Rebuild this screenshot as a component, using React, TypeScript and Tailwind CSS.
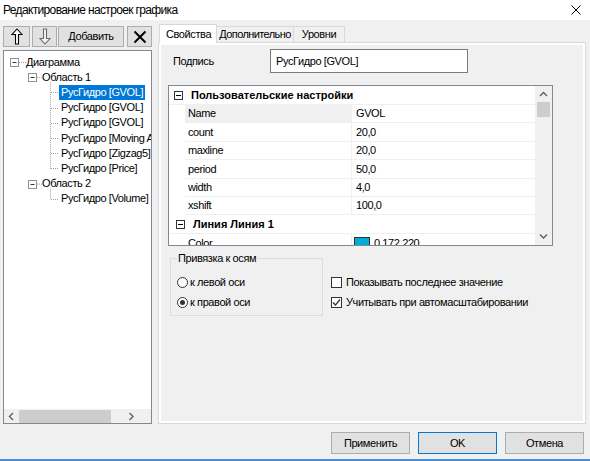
import React from "react";

// tree rows of the left panel
const treeRows = [
  { text: "Диаграмма", pad: "pl-[20px]" },
  { text: "Область 1", pad: "pl-[36px]" },
  { text: "РусГидро [GVOL]", pad: "pl-[55px]", selected: true },
  { text: "РусГидро [GVOL]", pad: "pl-[55px]" },
  { text: "РусГидро [GVOL]", pad: "pl-[55px]" },
  { text: "РусГидро [Moving Average]", pad: "pl-[55px]" },
  { text: "РусГидро [Zigzag5]", pad: "pl-[55px]" },
  { text: "РусГидро [Price]", pad: "pl-[55px]" },
  { text: "Область 2", pad: "pl-[36px]" },
  { text: "РусГидро [Volume]", pad: "pl-[55px]" },
];

const props = [
  { name: "Name", value: "GVOL", active: true },
  { name: "count", value: "20,0" },
  { name: "maxline", value: "20,0" },
  { name: "period", value: "50,0" },
  { name: "width", value: "4,0" },
  { name: "xshift", value: "100,0" },
];

const rowY = (i: number) => 11 + 15.2 * i;

const TreeLines = () => {
  const dot = { stroke: "#a0a0a0", strokeDasharray: "1 1", strokeWidth: 1 };
  const box = (cx: number, cy: number) => (
    <g key={`b${cx}-${cy}`}>
      <rect x={cx - 4} y={cy - 4} width={8} height={8} fill="#fff" stroke="#919191" />
      <line x1={cx - 2} y1={cy} x2={cx + 2} y2={cy} stroke="#333" />
    </g>
  );
  const leaves = [2, 3, 4, 5, 6, 7, 9];
  return (
    <svg className="absolute inset-0 pointer-events-none" width="147" height="358">
      <line x1={15} y1={rowY(0) + 0.5} x2={22} y2={rowY(0) + 0.5} {...dot} />
      <line x1={33} y1={rowY(1) + 0.5} x2={38} y2={rowY(1) + 0.5} {...dot} />
      <line x1={33} y1={rowY(8) + 0.5} x2={38} y2={rowY(8) + 0.5} {...dot} />
      <line x1={46.5} y1={rowY(1) + 5} x2={46.5} y2={rowY(7) + 0.5} {...dot} />
      <line x1={46.5} y1={rowY(8) + 5} x2={46.5} y2={rowY(9) + 0.5} {...dot} />
      {leaves.map((i) => (
        <line key={i} x1={47} y1={Math.round(rowY(i)) + 0.5} x2={54} y2={Math.round(rowY(i)) + 0.5} {...dot} />
      ))}
      {box(10.5, 11.5)}
      {box(28.5, 26.5)}
      {box(28.5, 133.5)}
    </svg>
  );
};

const MinusBox = () => (
  <svg width="9" height="9" className="shrink-0">
    <rect x="0.5" y="0.5" width="8" height="8" fill="#fff" stroke="#333" />
    <line x1="2" y1="4.5" x2="7" y2="4.5" stroke="#000" />
  </svg>
);

const Chevron = ({ dir }: { dir: "up" | "down" | "left" | "right" }) => {
  const d = {
    up: "M1 5 L4.5 1.5 L8 5",
    down: "M1 1.5 L4.5 5 L8 1.5",
    left: "M5 1 L1.5 4.5 L5 8",
    right: "M1.5 1 L5 4.5 L1.5 8",
  }[dir];
  const vertical = dir === "up" || dir === "down";
  return (
    <svg width={vertical ? 9 : 7} height={vertical ? 7 : 9}>
      <path d={d} fill="none" stroke="#606060" strokeWidth="1.4" />
    </svg>
  );
};

const Btn = ({ className = "", children }: { className?: string; children: React.ReactNode }) => (
  <div
    className={`h-full flex items-center justify-center bg-[#e1e1e1] border border-[#adadad] ${className}`}
  >
    {children}
  </div>
);

export default function App() {
  return (
    <div className="w-[590px] h-[461px] bg-[#f0f0f0] flex flex-col overflow-hidden text-[11px] text-black tracking-[-0.4px] font-['Liberation_Sans',Arial,sans-serif]">
      {/* title bar */}
      <div className="h-[20px] shrink-0 bg-white flex items-center justify-between pl-[3px] pr-[9px]">
        <span className="text-[12px] tracking-[-0.65px]">Редактирование настроек графика</span>
        <svg width="10" height="10">
          <path d="M0.5 0.5 L9.5 9.5 M9.5 0.5 L0.5 9.5" stroke="#000" strokeWidth="1" />
        </svg>
      </div>

      <div className="h-[404px] shrink-0 flex items-start px-[3px]">
        {/* left column */}
        <div className="w-[149px] pt-[6px] flex flex-col gap-[3px]">
          <div className="h-[21px] flex">
            <Btn className="w-[27px]">
              <svg width="12" height="17">
                <path d="M6 1 L11 6.5 L7.5 6.5 L7.5 16 L4.5 16 L4.5 6.5 L1 6.5 Z" fill="#fff" stroke="#000" strokeWidth="1.1" />
              </svg>
            </Btn>
            <Btn className="w-[25px] ml-[2px]">
              <svg width="12" height="17">
                <path d="M4.5 1 L7.5 1 L7.5 10.5 L11 10.5 L6 16 L1 10.5 L4.5 10.5 Z" fill="#f4f4f4" stroke="#6a6a6a" strokeWidth="1.1" />
              </svg>
            </Btn>
            <Btn className="w-[66px] ml-[1px]">Добавить</Btn>
            <Btn className="w-[25px] ml-[3px]">
              <svg width="14" height="14">
                <path d="M1.5 1.5 L12.5 12.5 M12.5 1.5 L1.5 12.5" stroke="#000" strokeWidth="2" />
              </svg>
            </Btn>
          </div>

          <div className="h-[374px] border border-[#828790] bg-white flex flex-col">
            <div className="relative flex-1 overflow-hidden pt-[3.4px]">
              <TreeLines />
              {treeRows.map((r, i) => (
                <div key={i} className={`h-[15.2px] flex items-center whitespace-nowrap ${r.pad}`}>
                  <span
                    className={`h-[15px] px-[2px] flex items-center ${r.selected ? "bg-[#0078d7] text-white" : ""}`}
                  >
                    {r.text}
                  </span>
                </div>
              ))}
            </div>
            <div className="h-[14px] bg-[#f0f0f0] flex items-center">
              <div className="w-[15px] flex justify-center">
                <Chevron dir="left" />
              </div>
              <div className="w-[92px] h-[13px] bg-[#cdcdcd]" />
              <div className="flex-1 flex justify-center">
                <Chevron dir="right" />
              </div>
            </div>
          </div>
        </div>

        {/* right column */}
        <div className="ml-[6px] w-[428px] pt-[4px] flex flex-col">
          <div className="h-[18px] flex items-end">
            <div className="relative z-10 ml-[1px] -mb-[1px] w-[58px] h-[19px] bg-white border border-b-0 border-[#d9d9d9] pl-[6px] flex items-center">
              Свойства
            </div>
            <div className="w-[77px] h-[16px] bg-[#f0f0f0] border border-l-0 border-b-0 border-[#d9d9d9] flex items-center justify-center tracking-[-0.6px]">
              Дополнительно
            </div>
            <div className="w-[51px] h-[16px] bg-[#f0f0f0] border border-l-0 border-b-0 border-[#d9d9d9] flex items-center justify-center">
              Уровни
            </div>
          </div>

          <div className="h-[382px] border border-[#d9d9d9] bg-white p-[2px]">
            <div className="h-full bg-[#f0f0f0] flex flex-col">
              {/* caption */}
              <div className="mt-[4px] flex items-center">
                <div className="w-[109px] pl-[12px]">Подпись</div>
                <div className="w-[198px] h-[24px] bg-white border border-[#7a7a7a] flex items-center pl-[5px]">
                  РусГидро [GVOL]
                </div>
              </div>

              {/* property grid */}
              <div className="ml-[7px] mt-[12px] w-[385px] h-[161px] border border-[#828790] bg-white flex overflow-hidden">
                <div className="flex-1 flex flex-col">
                  <div className="h-[19px] shrink-0 flex items-center pl-[5px] border-b border-[#f0f0f0]">
                    <MinusBox />
                    <span className="ml-[8px] font-bold tracking-normal">Пользовательские настройки</span>
                  </div>
                  {props.map((p) => (
                    <div key={p.name} className="h-[18.4px] shrink-0 flex">
                      <div className="w-[16px]" />
                      <div
                        className={`w-[166px] pl-[3px] flex items-center border-b border-[#f0f0f0] ${p.active ? "bg-[#f0f0f0]" : ""}`}
                      >
                        {p.name}
                      </div>
                      <div className="flex-1 pl-[4px] flex items-center border-l border-b border-[#f0f0f0]">
                        {p.value}
                      </div>
                    </div>
                  ))}
                  <div className="h-[18.4px] shrink-0 flex items-center pl-[7px] border-b border-[#f0f0f0]">
                    <MinusBox />
                    <span className="ml-[8px] font-bold tracking-normal">Линия Линия 1</span>
                  </div>
                  <div className="h-[18.4px] shrink-0 flex">
                    <div className="w-[16px]" />
                    <div className="w-[166px] pl-[3px] flex items-center">Color</div>
                    <div className="flex-1 pl-[2px] flex items-center border-l border-[#f0f0f0]">
                      <div className="w-[16px] h-[11px] bg-[#00acdc] border border-[#333]" />
                      <span className="ml-[4px]">0.172.220</span>
                    </div>
                  </div>
                </div>
                <div className="w-[17px] shrink-0 bg-[#f0f0f0] flex flex-col items-center">
                  <div className="h-[16px] flex items-center">
                    <Chevron dir="up" />
                  </div>
                  <div className="w-[13px] h-[15px] bg-[#cdcdcd]" />
                  <div className="flex-1" />
                  <div className="h-[17px] flex items-center">
                    <Chevron dir="down" />
                  </div>
                </div>
              </div>

              {/* axis binding + checkboxes */}
              <div className="flex items-start">
                <fieldset className="ml-[9px] mt-[6px] w-[153px] h-[64px] border border-[#dcdcdc] px-[6px]">
                  <legend className="px-[1px] leading-[13px]">Привязка к осям</legend>
                  <div className="pt-[7px] flex flex-col">
                    <div className="h-[20px] flex items-center">
                      <div className="w-[11px] h-[11px] rounded-full border border-[#333] bg-white" />
                      <span className="ml-[2px]">к левой оси</span>
                    </div>
                    <div className="h-[20px] flex items-center">
                      <div className="w-[11px] h-[11px] rounded-full border border-[#333] bg-white flex items-center justify-center">
                        <div className="w-[5px] h-[5px] rounded-full bg-[#333]" />
                      </div>
                      <span className="ml-[2px]">к правой оси</span>
                    </div>
                  </div>
                </fieldset>
                <div className="ml-[8px] mt-[26px] flex flex-col">
                  <div className="h-[20px] flex items-center">
                    <div className="w-[11px] h-[11px] border border-[#333] bg-white" />
                    <span className="ml-[4px]">Показывать последнее значение</span>
                  </div>
                  <div className="h-[20px] flex items-center">
                    <svg width="11" height="11" className="shrink-0">
                      <rect x="0.5" y="0.5" width="10" height="10" fill="#fff" stroke="#333" />
                      <path d="M2 5.5 L4.5 8 L9 2.5" fill="none" stroke="#333" strokeWidth="1.2" />
                    </svg>
                    <span className="ml-[4px]">Учитывать при автомасштабировании</span>
                  </div>
                </div>
              </div>
            </div>
          </div>
        </div>
      </div>

      {/* bottom buttons */}
      <div className="mt-[8px] h-[22px] shrink-0 flex justify-end gap-[8px] pr-[6px]">
        <Btn className="w-[79px]">Применить</Btn>
        <Btn className="w-[79px] !border-[#0078d7]">OK</Btn>
        <Btn className="w-[79px]">Отмена</Btn>
      </div>
      <div className="flex-1" />
      <div className="h-[2px] shrink-0 bg-[#4a8fd8]" />
    </div>
  );
}
